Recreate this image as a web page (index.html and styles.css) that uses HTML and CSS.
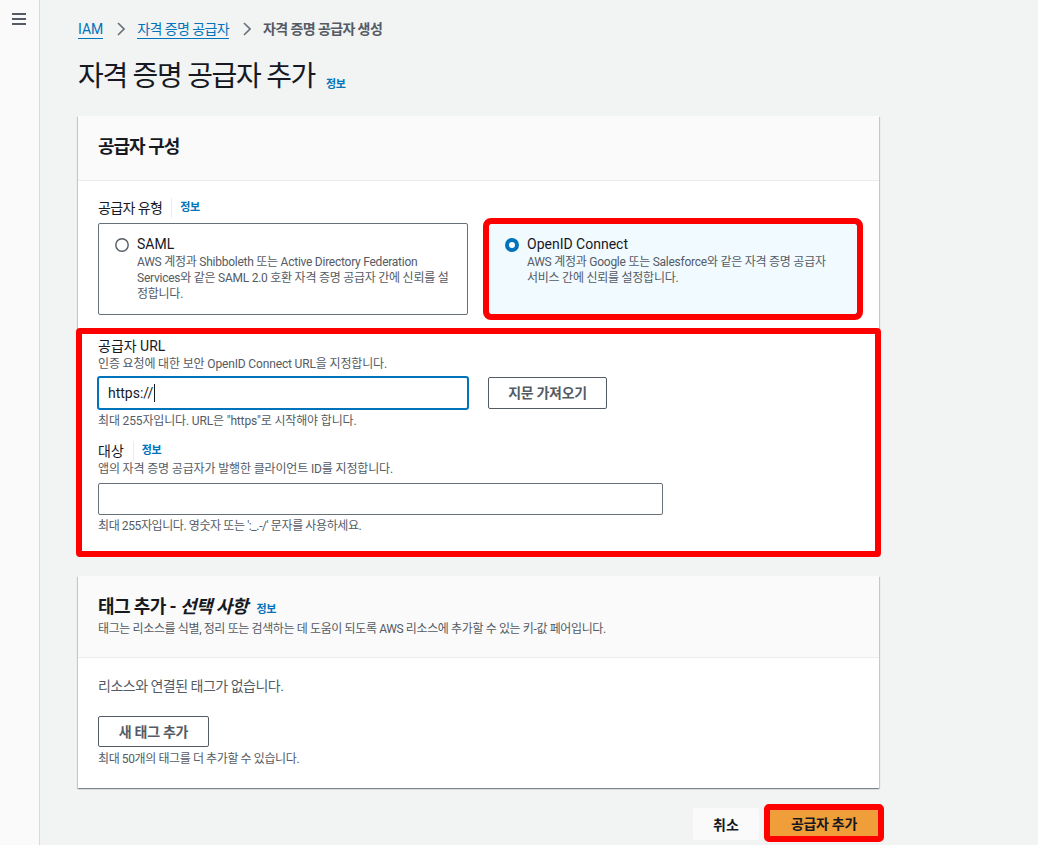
FILE: index.html
```html
<!DOCTYPE html>
<html lang="ko">
<head>
<meta charset="utf-8">
<title>자격 증명 공급자 추가</title>
<link rel="stylesheet" href="styles.css">
</head>
<body>
<div class="app">
  <aside class="sidebar">
    <svg class="menu" width="14" height="12" viewBox="0 0 14 12" aria-hidden="true">
      <path d="M0 1h14M0 6h14M0 11h14" stroke="#545b64" stroke-width="2" fill="none"/>
    </svg>
  </aside>
  <main class="main">
    <div class="content">
      <nav class="crumbs">
        <a class="crumb-link" href="#">IAM</a>
        <svg class="chev" width="8" height="14" viewBox="0 0 8 14" aria-hidden="true"><path d="M1 1l6 6-6 6" stroke="#687078" stroke-width="1.6" fill="none"/></svg>
        <a class="crumb-link ko" href="#">자격 증명 공급자</a>
        <svg class="chev" width="8" height="14" viewBox="0 0 8 14" aria-hidden="true"><path d="M1 1l6 6-6 6" stroke="#687078" stroke-width="1.6" fill="none"/></svg>
        <span class="crumb-current ko">자격 증명 공급자 생성</span>
      </nav>

      <h1 class="page-title"><span class="title-text">자격 증명 공급자 추가</span> <a class="info" href="#">정보</a></h1>

      <section class="panel">
        <header class="panel-head">
          <h2 class="panel-title">공급자 구성</h2>
        </header>
        <div class="panel-body">
          <div class="label-row"><span class="ko">공급자 유형</span><span class="sep"></span><a class="info" href="#">정보</a></div>
          <div class="tiles">
            <div class="tile">
              <svg class="radio" width="14" height="14" viewBox="0 0 14 14" aria-hidden="true"><circle cx="7" cy="7" r="6.2" stroke="#545b64" stroke-width="1.4" fill="#fff"/></svg>
              <div class="tile-text">
                <div class="tile-title">SAML</div>
                <div class="tile-desc">AWS 계정과 Shibboleth 또는 Active Directory Federation Services와 같은 SAML 2.0 호환 자격 증명 공급자 간에 신뢰를 설정합니다.</div>
              </div>
            </div>
            <div class="tile tile-selected mark">
              <svg class="radio" width="14" height="14" viewBox="0 0 14 14" aria-hidden="true"><circle cx="7" cy="7" r="5" stroke="#0073bb" stroke-width="4" fill="#fff"/></svg>
              <div class="tile-text">
                <div class="tile-title">OpenID Connect</div>
                <div class="tile-desc">AWS 계정과 Google 또는 Salesforce와 같은 자격 증명 공급자 <span class="nowrap">서비스</span> 간에 신뢰를 설정합니다.</div>
              </div>
            </div>
          </div>
        </div>
        <div class="url-block mark">
          <div class="field-label">공급자 URL</div>
          <div class="field-desc">인증 요청에 대한 보안 OpenID Connect URL을 지정합니다.</div>
          <div class="input-row">
            <div class="input input-focus">https://<span class="caret"></span></div>
            <button class="btn" type="button">지문 가져오기</button>
          </div>
          <div class="hint hint-url">최대 255자입니다. URL은 "https"로 시작해야 합니다.</div>

          <div class="field-label label-row gap-top"><span>대상</span><span class="sep"></span><a class="info" href="#">정보</a></div>
          <div class="field-desc ko-tight">앱의 자격 증명 공급자가 발행한 클라이언트 ID를 지정합니다.</div>
          <div class="input input-wide"></div>
          <div class="hint hint-tight ko-tight">최대 255자입니다. 영숫자 또는 ':_.-/' 문자를 사용하세요.</div>
        </div>
      </section>

      <section class="panel panel-tags">
        <header class="panel-head tags-head">
          <h2 class="panel-title tags-title">태그 추가 - <em>선택 사항</em> <a class="info" href="#">정보</a></h2>
          <div class="head-desc">태그는 리소스를 식별, 정리 또는 검색하는 데 도움이 되도록 AWS 리소스에 추가할 수 있는 키-값 페어입니다.</div>
        </header>
        <div class="tags-body">
          <div class="empty">리소스와 연결된 태그가 없습니다.</div>
          <button class="btn btn-tag" type="button">새 태그 추가</button>
          <div class="hint ko-tight">최대 50개의 태그를 더 추가할 수 있습니다.</div>
        </div>
      </section>

      <div class="actions">
        <button class="btn-cancel" type="button">취소</button>
        <button class="btn-primary" type="button">공급자 추가</button>
      </div>
    </div>
  </main>
</div>
</body>
</html>
```

FILE: styles.css
```css
* { box-sizing: border-box; }

body {
  margin: 0;
  background: #f2f3f3;
  color: #16191f;
  font-family: Roboto, "Noto Sans CJK KR", sans-serif;
  font-size: 14px;
  line-height: 20px;
  font-feature-settings: "palt";
}

a { text-decoration: none; }

.ko { letter-spacing: -0.6px; }
.ko-tight { letter-spacing: -0.4px; }
.nowrap { white-space: nowrap; }

.app {
  display: flex;
  min-height: 845px;
}

.sidebar {
  flex: none;
  width: 40px;
  background: #fafafa;
  border-right: 1px solid #d5dbdb;
}

.menu {
  display: block;
  margin: 13px 0 0 12px;
}

.main {
  flex: 1;
  padding: 19px 0 0 38px;
}

.content {
  width: 801px;
}

/* breadcrumbs */
.crumbs {
  display: flex;
  align-items: center;
  height: 20px;
}

.crumb-link {
  color: #0073bb;
  border-bottom: 1px solid #0073bb;
  line-height: 18px;
}

.chev {
  margin: 0 12px 0 14px;
}

.crumb-current {
  color: #545b64;
  font-weight: 700;
}

/* title */
.page-title {
  margin: 20px 0 21px;
  font-size: 28px;
  line-height: 36px;
  font-weight: 400;
  color: #16191f;
}

.title-text {
  letter-spacing: -1.3px;
}

.info {
  color: #0073bb;
  font-size: 11px;
  font-weight: 700;
  line-height: 16px;
  letter-spacing: -0.3px;
}

.page-title .info {
  margin-left: 4px;
  vertical-align: -2px;
}

/* panels */
.panel {
  background: #fff;
  box-shadow: 0 1px 1px 0 rgba(0, 28, 36, .3), 1px 1px 1px 0 rgba(0, 28, 36, .15), -1px 1px 1px 0 rgba(0, 28, 36, .15);
}

.panel-head {
  background: #fafafa;
  border-bottom: 1px solid #eaeded;
  padding: 19px 20px 21px;
}

.panel-title {
  margin: 0;
  font-size: 18px;
  line-height: 24px;
  font-weight: 700;
  letter-spacing: -1px;
}

.tags-title {
  letter-spacing: -0.6px;
}

.panel-title em {
  font-style: italic;
}

.panel-title .info {
  font-size: 11px;
  margin-left: 5px;
  letter-spacing: -0.3px;
}

.panel-body {
  padding: 17px 20px 15px;
}

.label-row {
  display: flex;
  align-items: center;
  height: 20px;
}

.sep {
  width: 1px;
  height: 20px;
  background: #eaeded;
  margin: 0 8px 0 9px;
}

.tiles {
  display: grid;
  grid-template-columns: 370px 370px;
  gap: 20px;
  margin-top: 5px;
}

.tile {
  display: flex;
  gap: 8px;
  height: 92px;
  border: 1px solid #687078;
  border-radius: 2px;
  padding: 10px 14px 10px 16px;
  background: #fff;
}

.tile-selected {
  background: #f1faff;
  border-color: #0073bb;
}

.mark {
  outline: 6px solid #ff0000;
  outline-offset: -1px;
  border-radius: 3px;
}

.radio {
  flex: none;
  margin-top: 4px;
}

.tile-title {
  font-size: 14px;
  line-height: 20px;
  color: #16191f;
}

.tile-desc {
  font-size: 12px;
  line-height: 16px;
  color: #545b64;
  letter-spacing: -0.25px;
}

/* url block */
.url-block {
  padding: 6px 20px 21px;
  outline-offset: -4px;
  border-radius: 2px;
}

.field-label {
  font-size: 14px;
  line-height: 20px;
  color: #16191f;
}

.field-desc,
.hint,
.head-desc {
  font-size: 12px;
  line-height: 16px;
  color: #545b64;
}

.field-desc {
  letter-spacing: -0.15px;
}

.hint-url {
  letter-spacing: -0.15px;
}

.head-desc {
  letter-spacing: -0.38px;
}

.input-row {
  display: flex;
  align-items: center;
  gap: 20px;
  margin-top: 5px;
}

.input {
  display: flex;
  align-items: center;
  height: 32px;
  border: 1px solid #687078;
  border-radius: 2px;
  padding: 0 9px;
  background: #fff;
  font-size: 14px;
  color: #16191f;
}

.input-focus {
  width: 370px;
  border-color: #0073bb;
  box-shadow: 0 0 0 1px #0073bb;
}

.caret {
  display: inline-block;
  width: 1px;
  height: 18px;
  background: #16191f;
  margin-left: 1px;
}

.input-wide {
  width: 565px;
  margin-top: 6px;
}

.hint {
  margin-top: 4px;
}

.hint-tight {
  margin-top: 3px;
}

.gap-top {
  margin-top: 12px;
}

.btn {
  height: 32px;
  padding: 0 20px;
  border: 1px solid #545b64;
  border-radius: 2px;
  background: #fff;
  color: #545b64;
  font-family: inherit;
  font-size: 14px;
  font-weight: 700;
  line-height: 20px;
  letter-spacing: -0.3px;
}

.input-row .btn {
  width: 119px;
  padding: 0;
}

/* tags panel */
.panel-tags {
  margin-top: 21px;
}

.tags-head {
  padding: 19px 20px 20px;
}

.head-desc {
  margin-top: 2px;
}

.tags-body {
  padding: 18px 20px 21px;
}

.empty {
  font-size: 14px;
  line-height: 20px;
  color: #545b64;
  letter-spacing: -0.5px;
}

.btn-tag {
  display: block;
  width: 111px;
  height: 31px;
  padding: 0;
  margin-top: 20px;
}

/* footer actions */
.actions {
  display: flex;
  justify-content: flex-end;
  align-items: center;
  gap: 8px;
  margin-top: 18px;
}

.btn-cancel {
  width: 66px;
  height: 32px;
  margin-top: 2px;
  border: none;
  border-radius: 2px;
  background: #fafafa;
  color: #16191f;
  font-family: inherit;
  font-size: 14px;
  font-weight: 700;
}

.btn-primary {
  width: 114px;
  height: 32px;
  margin-right: -2px;
  border: none;
  border-radius: 2px;
  background: #f09e3a;
  color: #16191f;
  font-family: inherit;
  font-size: 14px;
  font-weight: 700;
  letter-spacing: -0.3px;
  outline: 6px solid #ff0000;
  outline-offset: -3px;
}
```
